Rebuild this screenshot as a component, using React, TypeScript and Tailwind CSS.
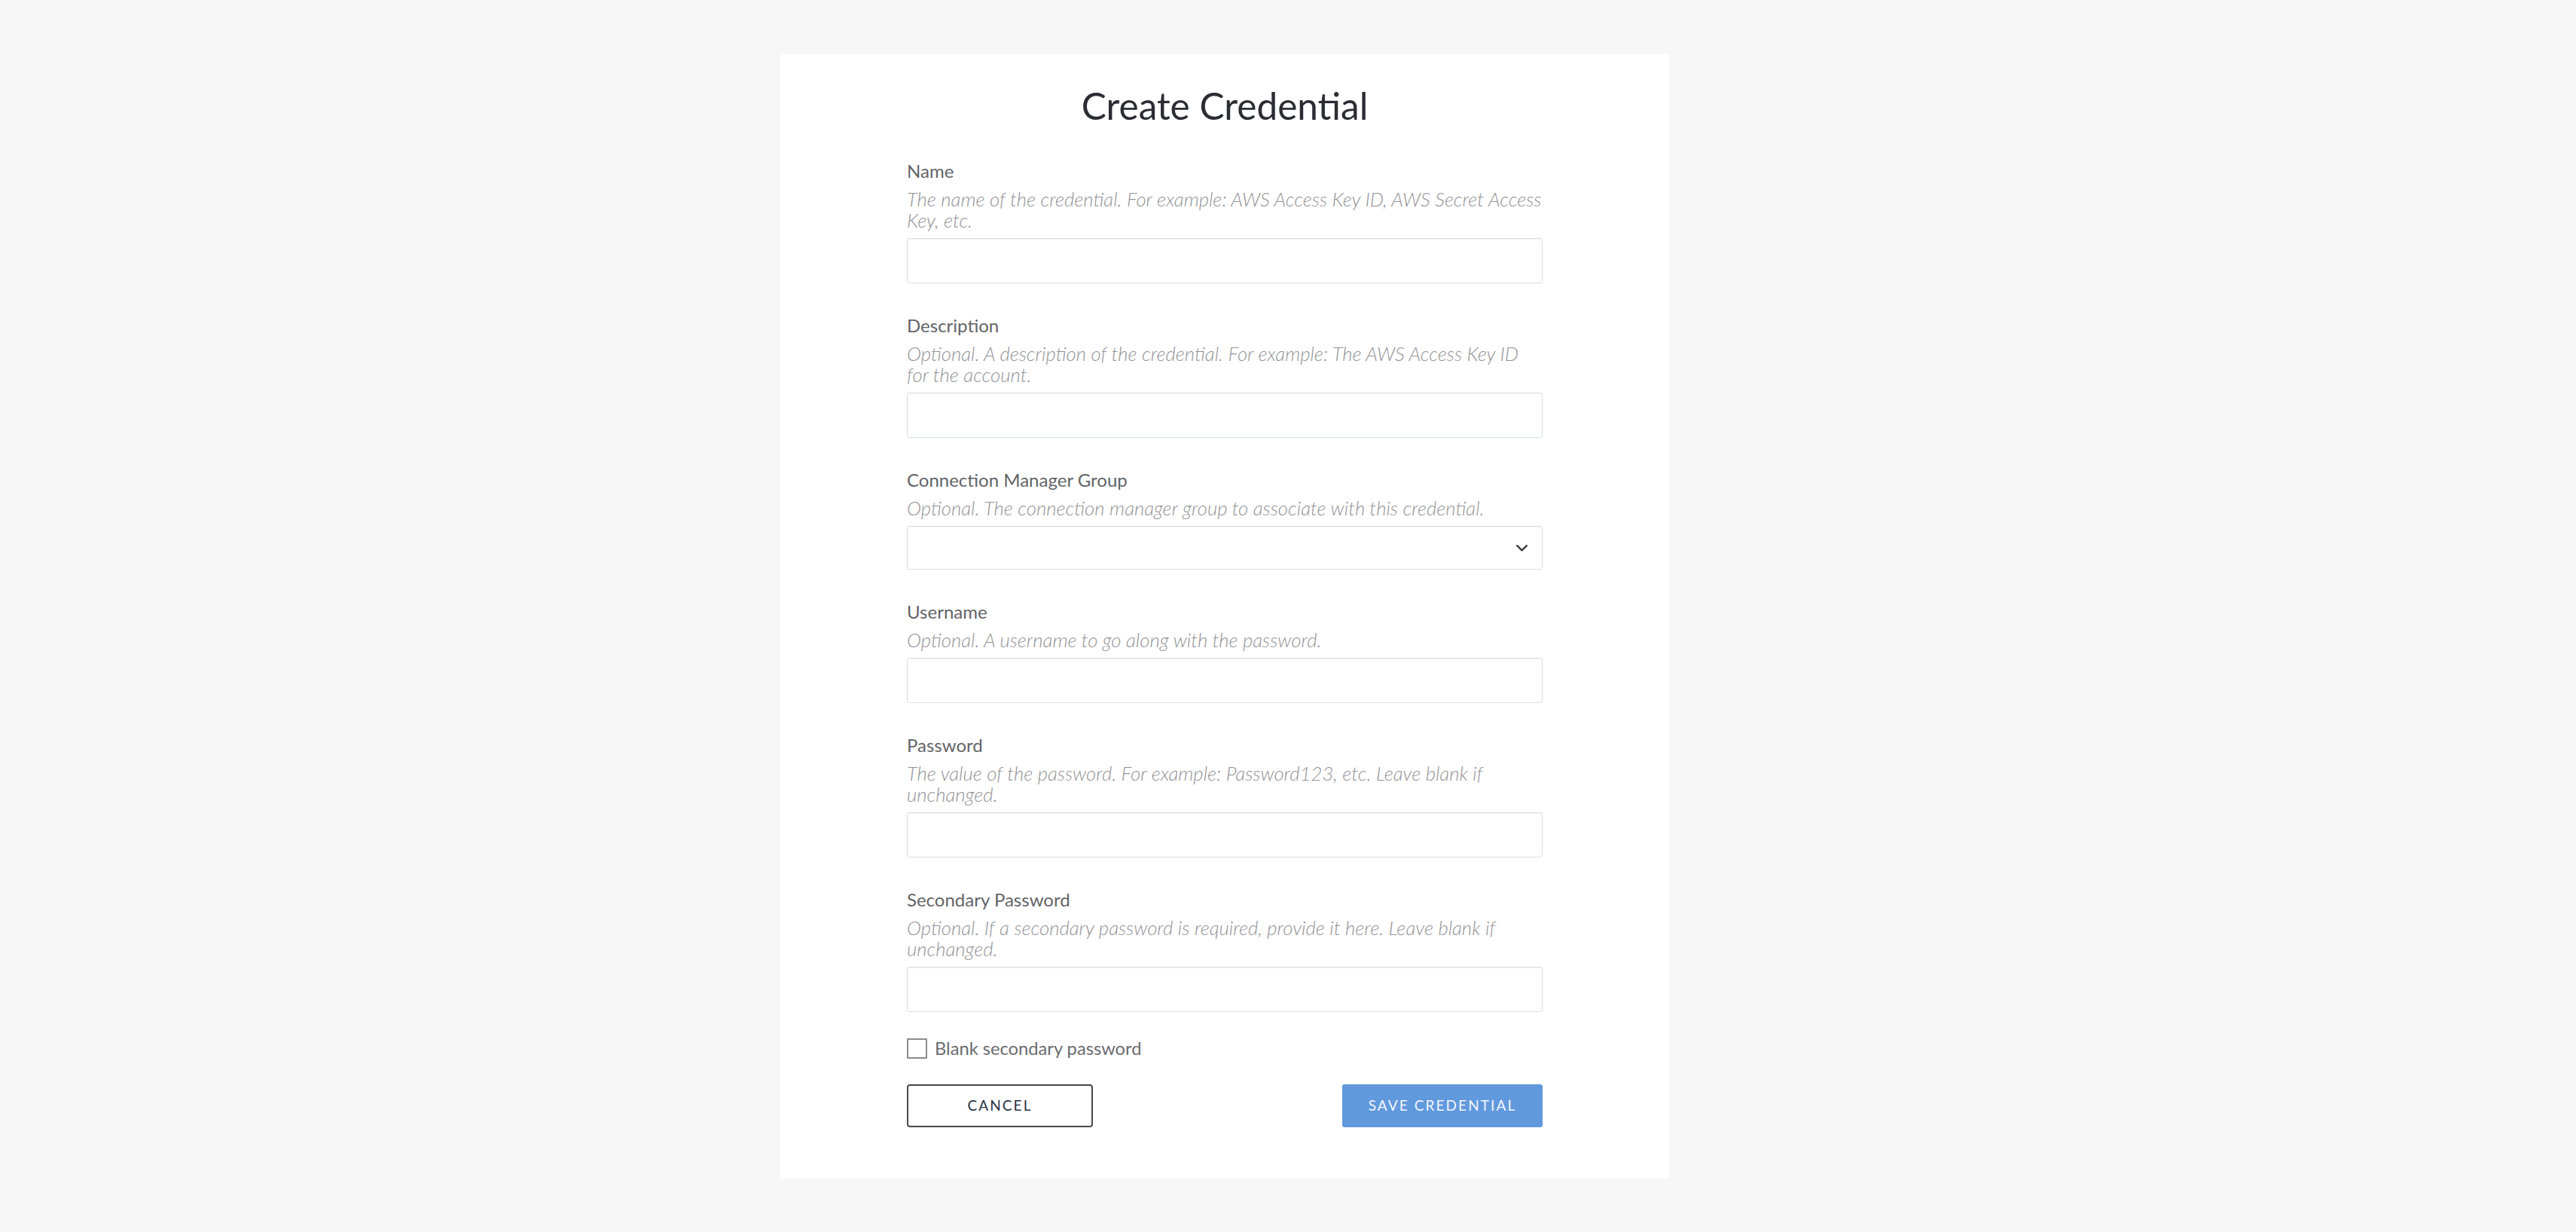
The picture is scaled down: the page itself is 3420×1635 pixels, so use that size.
import React from "react";

type FieldProps = {
  label: string;
  hint: string;
  kind?: "text" | "password" | "select";
};

function Field({ label, hint, kind = "text" }: FieldProps) {
  return (
    <div className="flex flex-col">
      <label className="text-[24px] leading-[32px] text-[#626468]">{label}</label>
      <p className="mt-[7px] text-[25.72px] leading-[28px] italic font-light text-[#939396]">{hint}</p>
      {kind === "select" ? (
        <div className="mt-[10px] h-[58px] rounded-[3px] border border-[#dadde2] bg-white flex items-center justify-end pr-[19px] shadow-[inset_0_1px_1px_rgba(0,0,0,0.04)]">
          <svg width="15" height="9" viewBox="0 0 15 9" fill="none">
            <polyline points="1.2,1.2 7.5,7.3 13.8,1.2" stroke="#3a3c42" strokeWidth="2.4" strokeLinecap="round" strokeLinejoin="round" />
          </svg>
        </div>
      ) : (
        <input
          type={kind}
          className="mt-[10px] h-[60px] rounded-[3px] border border-[#dadde2] bg-white px-4 outline-none shadow-[inset_0_1px_1px_rgba(0,0,0,0.05)]"
        />
      )}
    </div>
  );
}

export default function App() {
  return (
    <div className="min-h-screen bg-[#f7f7f7] pt-[72px] pb-[71px]" style={{ fontFamily: "Lato, 'Open Sans', sans-serif" }}>
      <div className="ml-[1036px] w-[1180px] rounded-[4px] bg-white pt-[40px] pb-[68px]">
        <h1 className="text-center text-[49.5px] leading-[56px] text-[#2b2d33]">Create Credential</h1>
        <form className="mx-auto mt-[43px] flex w-[844px] flex-col gap-[40px]">
          <Field
            label="Name"
            hint="The name of the credential. For example: AWS Access Key ID, AWS Secret Access Key, etc."
          />
          <Field
            label="Description"
            hint="Optional. A description of the credential. For example: The AWS Access Key ID for the account."
          />
          <Field
            label="Connection Manager Group"
            hint="Optional. The connection manager group to associate with this credential."
            kind="select"
          />
          <Field label="Username" hint="Optional. A username to go along with the password." />
          <Field
            label="Password"
            hint="The value of the password. For example: Password123, etc. Leave blank if unchanged."
            kind="password"
          />
          <Field
            label="Secondary Password"
            hint="Optional. If a secondary password is required, provide it here. Leave blank if unchanged."
            kind="password"
          />
        </form>
        <div className="mx-auto w-[844px]">
          <label className="mt-[32px] flex items-center gap-[10px] h-[32px]">
            <span className="h-[27px] w-[27px] border-2 border-[#8c8c8c] bg-white rounded-[1px]" />
            <span className="text-[23.7px] leading-[32px] text-[#6a6b6e]">Blank secondary password</span>
          </label>
          <div className="mt-[32px] flex items-center justify-between">
            <button
              type="button"
              className="h-[57px] w-[247px] rounded-[4px] border-2 border-[#47494f] bg-white text-[19px] tracking-[0.11em] text-[#273044]"
            >
              CANCEL
            </button>
            <button
              type="button"
              className="h-[57px] w-[266px] rounded-[3px] bg-[#6199dd] text-[19px] tracking-[0.11em] text-[#f3f7fc]"
            >
              SAVE CREDENTIAL
            </button>
          </div>
        </div>
      </div>
    </div>
  );
}
